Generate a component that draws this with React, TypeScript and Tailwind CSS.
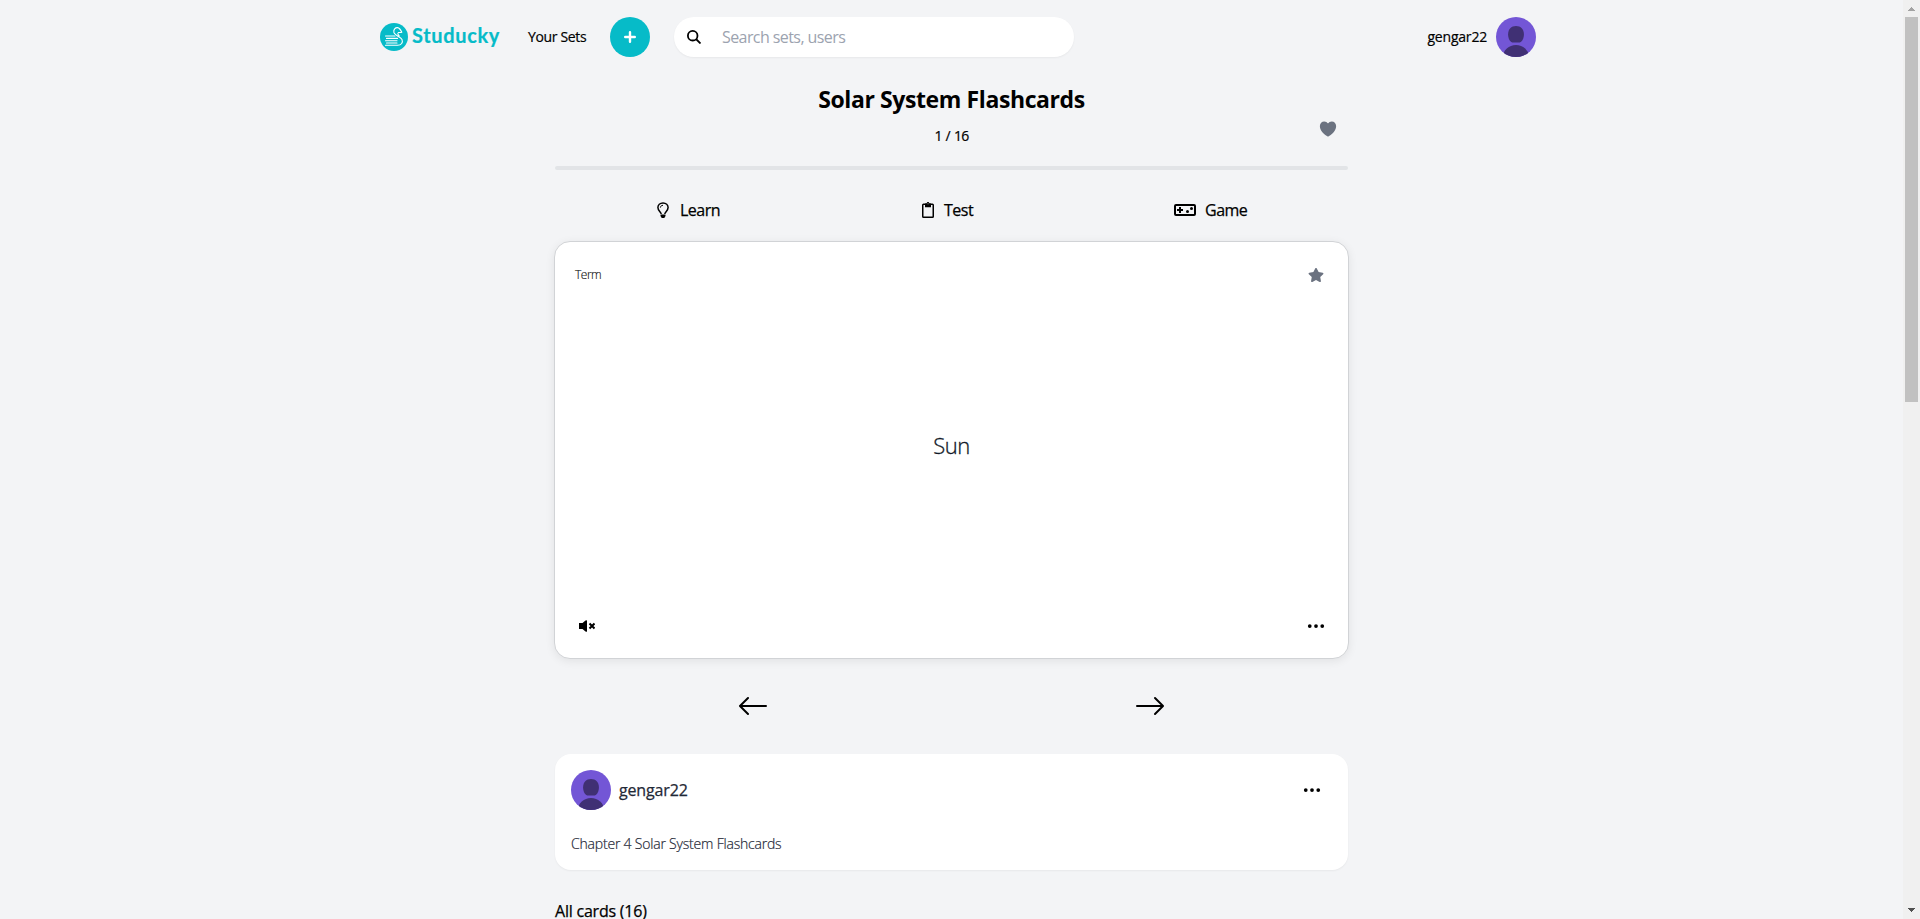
import React from "react";
import { BsArrowLeft, BsArrowRight, BsThreeDots } from "react-icons/bs";
import { IoHeart } from "react-icons/io5";
import { FaStar } from "react-icons/fa";

function LogoMark() {
  return (
    <svg width="28" height="28" viewBox="0 0 28 28" fill="none">
      <circle cx="14" cy="14" r="14" fill="#06bbc8" />
      <g stroke="#fff" strokeLinecap="round" strokeLinejoin="round">
        <path strokeWidth="1.1" d="M5.5 13H15M6.5 15.4H17.5M5.5 17.8H17M6.5 20H17" />
        <path strokeWidth="1.1" d="M5.5 22.3H17.500C21.500 22.300 23.200 19.400 22 16.600C20.800 14 14.800 12.600 13.900 9.400C13.200 6.400 15.400 4.400 17.600 4.600C19.600 4.800 20.600 6.800 21.800 9.200C20.400 9.800 19.600 9.200 18.400 9.600C17.200 10.400 18 11.600 19.200 12.800" />
      </g>
    </svg>
  );
}

function Avatar() {
  return (
    <svg className="shrink-0" width="40" height="40" viewBox="0 0 40 40">
      <defs>
        <clipPath id="avatar">
          <circle cx="20" cy="20" r="20" />
        </clipPath>
      </defs>
      <g clipPath="url(#avatar)">
        <rect width="40" height="40" fill="#7356d6" />
        <path fill="#403074" d="M20 9c4.800 0 7.900 3.200 7.900 8.200 0 4.800-2.200 8.300-5.300 8.300h-5.200c-3.100 0-5.300-3.500-5.300-8.300C12.100 12.200 15.200 9 20 9z" />
        <ellipse cx="20" cy="40" rx="13" ry="12" fill="#403074" />
      </g>
    </svg>
  );
}

function SearchIcon() {
  return (
    <svg width="14" height="14" viewBox="0 0 14 14" fill="none" stroke="#000" strokeWidth="1.800">
      <circle cx="5.700" cy="5.700" r="4.800" />
      <path d="M9 9l4.500 4.500" />
    </svg>
  );
}

function PlusIcon() {
  return (
    <svg width="12" height="12" viewBox="0 0 12 12" stroke="#fff" strokeWidth="2.400" strokeLinecap="round">
      <path d="M6 1.200v9.600M1.200 6h9.600" />
    </svg>
  );
}

function BulbIcon() {
  return (
    <svg width="12" height="16" viewBox="0 0 12 16" fill="none">
      <path stroke="#000" strokeWidth="1.500" d="M4.200 12C4 10.200.9 8.800.9 5.600.9 2.900 3 .9 6 .9s5.100 2 5.100 4.700c0 3.200-3.100 4.600-3.300 6.400" />
      <path stroke="#000" strokeWidth="1" d="M3.400 5.600C3.400 4.300 4.500 3.300 6 3.300" />
      <path fill="#000" d="M3.500 12.600h5v1.300L7.300 16H4.700l-1.200-2.100z" />
    </svg>
  );
}

function ClipboardIcon() {
  return (
    <svg width="12" height="16" viewBox="0 0 12 16" fill="none">
      <rect x=".75" y="2.250" width="10.500" height="13" rx=".8" stroke="#000" strokeWidth="1.500" />
      <path fill="#000" d="M3 1.500h1.500C4.700.6 5.200 0 6 0s1.300.6 1.500 1.500H9v3.700H3z" />
      <circle cx="6" cy="1.800" r=".7" fill="#777" />
    </svg>
  );
}

function GameIcon() {
  return (
    <svg width="22" height="12" viewBox="0 0 22 12" fill="none">
      <rect x="1" y="1" width="20" height="10" rx="1" stroke="#000" strokeWidth="2" />
      <path stroke="#000" strokeWidth="2" d="M6 3v6M3 6h6" />
      <circle cx="13.500" cy="7.500" r="1.500" fill="#000" />
      <circle cx="17.500" cy="4.500" r="1.500" fill="#000" />
    </svg>
  );
}

function MuteIcon() {
  return (
    <svg width="16" height="12" viewBox="0 0 16 12">
      <path d="M0 3h3.500L6.500.5Q8 -.3 8 .8v10.400q0 1.100-1.500.3L3.500 9H0z" />
      <path stroke="#000" strokeWidth="2" d="M10.500 3.500l5 5M15.500 3.500l-5 5" />
    </svg>
  );
}

function Scrollbar() {
  return (
    <div className="flex h-full w-[17px] shrink-0 flex-col items-center bg-[#f0f0f0]">
      <svg width="17" height="17" shapeRendering="crispEdges">
        <path d="M5 11h7L8.500 7z" fill="#a3a3a3" />
      </svg>
      <div className="h-[385px] w-[13px] bg-[#c1c1c1]" />
      <svg className="mt-auto" width="17" height="17" shapeRendering="crispEdges">
        <path d="M5 6h7l-3.500 4z" fill="#505050" />
      </svg>
    </div>
  );
}

export default function App() {
  return (
    <div className="flex h-[919px] w-[1920px] overflow-hidden bg-[#f3f4f6] font-['Open_Sans','Noto_Sans',sans-serif] text-black">
      <div className="flex-1 overflow-hidden">
        <header className="ml-[380px] flex h-[74px] w-[1156px] items-center whitespace-nowrap">
          <a className="flex items-center">
            <LogoMark />
            <span className="-mt-1 ml-[4px] w-[115px] font-[Lato] text-[20px] leading-6 font-bold tracking-[0.65px] text-[#06bbc8] [-webkit-text-stroke:0.2px]">Studucky</span>
          </a>
          <span className="ml-px w-[82px] text-sm font-medium tracking-[-0.35px] [-webkit-text-stroke:0.2px]">Your Sets</span>
          <button className="flex size-10 items-center justify-center rounded-full bg-[#06bbc8]">
            <PlusIcon />
          </button>
          <div className="ml-6 flex h-10 w-[400px] items-center rounded-full bg-white pl-[13px] shadow-xs">
            <SearchIcon />
            <span className="ml-[21px] text-base tracking-[-0.58px] text-[#9ca3af]">Search sets, users</span>
          </div>
          <div className="ml-auto flex items-center gap-[9px]">
            <span className="text-sm font-medium tracking-[-0.2px] [-webkit-text-stroke:0.2px]">gengar22</span>
            <Avatar />
          </div>
        </header>

        <main className="mx-auto w-[793px] whitespace-nowrap">
          <section className="relative h-[92px] pt-[9px] text-center">
            <h1 className="text-[23px] leading-8 font-bold tracking-[-0.4px]">Solar System Flashcards</h1>
            <p className="mt-[11px] text-sm font-medium tracking-[-0.7px] [word-spacing:1px] [-webkit-text-stroke:0.2px]">1 / 16</p>
            <IoHeart className="absolute top-[45px] right-[10px] size-5 text-[#6b7280]" />
          </section>
          <div className="h-1 rounded-full bg-[#e2e4e7]" />

          <nav className="flex h-[71px] items-center pt-[9px] text-base font-medium tracking-[-0.5px] [-webkit-text-stroke:0.25px]">
            <a className="ml-[102px] flex w-[265px] items-center gap-[11px]">
              <BulbIcon />
              <span>Learn</span>
            </a>
            <a className="flex w-[252px] items-center gap-[10px]">
              <ClipboardIcon />
              <span>Test</span>
            </a>
            <a className="flex items-center gap-[9px]">
              <GameIcon />
              <span>Game</span>
            </a>
          </nav>

          <section className="-mx-px flex h-[418px] flex-col justify-between rounded-2xl border border-[#d1d3d6] bg-white pr-[24px] pb-[22px] pl-[20px] shadow-[0_2px_10px_rgba(0,0,0,0.08)]">
            <div className="flex items-center justify-between pt-[23px]">
              <span className="text-xs leading-5 font-light tracking-[-0.5px] text-[#111] [-webkit-text-stroke:0.15px]">Term</span>
              <FaStar className="-mt-px size-4 text-[#6b7280]" />
            </div>
            <div className="-mt-[11px] pl-[4px] text-center text-[22px] leading-8 font-light tracking-[-0.5px] text-[#111827] [-webkit-text-stroke:0.3px]">Sun</div>
            <div className="flex items-center justify-between pl-[4px]">
              <MuteIcon />
              <BsThreeDots className="-mr-[2px] size-5" />
            </div>
          </section>

          <div className="flex h-[95px] items-center pb-px">
            <div className="flex w-1/2 justify-center">
              <BsArrowLeft className="size-8" />
            </div>
            <div className="flex w-1/2 justify-center">
              <BsArrowRight className="size-8" />
            </div>
          </div>

          <section className="h-[116px] rounded-2xl bg-white p-4 shadow-xs">
            <div className="flex items-center">
              <Avatar />
              <span className="ml-2 text-base font-medium tracking-[-0.15px] text-[#1f2937] [-webkit-text-stroke:0.25px]">gengar22</span>
              <BsThreeDots className="mr-[10px] ml-auto size-5" />
            </div>
            <p className="mt-6 text-sm font-light tracking-[-0.2px] text-[#1f2937] [-webkit-text-stroke:0.2px]">Chapter 4 Solar System Flashcards</p>
          </section>
          <h2 className="mt-[29px] text-base font-medium tracking-[-0.22px] [-webkit-text-stroke:0.25px]">All cards (16)</h2>
        </main>
      </div>
      <Scrollbar />
    </div>
  );
}
